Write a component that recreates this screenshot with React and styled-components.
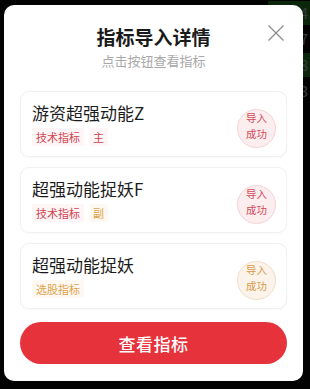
import React from 'react';
import styled, { createGlobalStyle } from 'styled-components';

const GlobalStyle = createGlobalStyle`
  html, body {
    margin: 0;
    padding: 0;
    background: #050505;
  }
  body {
    font-family: "Noto Sans CJK SC", "Noto Sans", sans-serif;
  }
`;

const Screen = styled.div`
  position: relative;
  width: 310px;
  height: 389px;
  overflow: hidden;
  background: #0c0c0c;
`;

const StockList = styled.div`
  display: flex;
  flex-direction: column;
`;

const StockRow = styled.div`
  display: flex;
  align-items: center;
  justify-content: flex-end;
  height: 26px;
  color: #cfcfcf;
  font-size: 15px;
`;

const StockValue = styled.span`
  width: 40px;
  height: 24px;
  line-height: 24px;
  text-align: right;
  padding-right: 2px;
  background: ${(p) => (p.$up ? '#2d8a2d' : 'transparent')};
`;

const Overlay = styled.div`
  position: absolute;
  inset: 0;
  background: rgba(0, 0, 0, 0.72);
  display: flex;
  align-items: flex-start;
  padding: 5px 7px 0 4px;
`;

const Modal = styled.div`
  position: relative;
  width: 299px;
  box-sizing: border-box;
  background: #ffffff;
  border-radius: 10px;
  padding: 19px 16px 17px;
  display: flex;
  flex-direction: column;
`;

const Header = styled.div`
  display: flex;
  flex-direction: column;
  align-items: center;
  gap: 2px;
  margin-bottom: 21px;
`;

const Title = styled.h2`
  margin: 0;
  font-size: 19px;
  line-height: 26px;
  font-weight: 600;
  color: #1a1a1a;
`;

const Subtitle = styled.p`
  margin: 0;
  font-size: 13px;
  line-height: 18px;
  color: #a8a8a8;
`;

const CloseButton = styled.button`
  position: absolute;
  top: 20px;
  right: 19px;
  width: 16px;
  height: 16px;
  padding: 0;
  border: none;
  background: none;
  display: flex;
`;

const CardList = styled.div`
  display: flex;
  flex-direction: column;
  gap: 10px;
`;

const Card = styled.div`
  display: flex;
  justify-content: space-between;
  height: 66px;
  box-sizing: border-box;
  padding: 10px 10px 0 11px;
  border: 1px solid #f0f0f0;
  border-radius: 9px;
  box-shadow: 0 1px 3px rgba(0, 0, 0, 0.03);
`;

const CardInfo = styled.div`
  display: flex;
  flex-direction: column;
  gap: 4px;
`;

const CardTitle = styled.div`
  font-size: 17px;
  line-height: 22px;
  color: #1c1c1c;
`;

const TagRow = styled.div`
  display: flex;
  gap: 5px;
`;

const tagColors = {
  red: { fg: '#d2434f', bg: '#fdf5f6' },
  gold: { fg: '#e2a24a', bg: '#fdf9f2' },
};

const Tag = styled.span`
  font-size: 11px;
  line-height: 18px;
  padding: 0 4px;
  border-radius: 3px;
  color: ${(p) => tagColors[p.$tone].fg};
  background: ${(p) => tagColors[p.$tone].bg};
`;

const badgeColors = {
  red: { fg: '#d24a58', bg: '#fcedef', border: '#f3d3d8' },
  gold: { fg: '#d99a4c', bg: '#fcf4ea', border: '#f1ddc4' },
};

const Badge = styled.div`
  width: 39px;
  height: 39px;
  box-sizing: border-box;
  margin-top: 7px;
  border-radius: 50%;
  border: 1px solid ${(p) => badgeColors[p.$tone].border};
  background: ${(p) => badgeColors[p.$tone].bg};
  color: ${(p) => badgeColors[p.$tone].fg};
  font-size: 10.5px;
  line-height: 15.5px;
  display: flex;
  flex-direction: column;
  align-items: center;
  justify-content: center;
  padding-bottom: 6px;
  flex-shrink: 0;
`;

const PrimaryButton = styled.button`
  margin-top: 13px;
  height: 42px;
  border: none;
  border-radius: 21px;
  background: #e6323a;
  color: #ffffff;
  font-family: inherit;
  font-size: 17px;
  font-weight: 500;
  letter-spacing: 0.5px;
`;

const stocks = [
  { value: '4', up: true },
  { value: '7', up: false },
  { value: '8', up: true },
  { value: '3', up: false },
];

const items = [
  {
    name: '游资超强动能Z',
    tags: [
      { text: '技术指标', tone: 'red' },
      { text: '主', tone: 'red' },
    ],
    tone: 'red',
  },
  {
    name: '超强动能捉妖F',
    tags: [
      { text: '技术指标', tone: 'red' },
      { text: '副', tone: 'gold' },
    ],
    tone: 'red',
  },
  {
    name: '超强动能捉妖',
    tags: [{ text: '选股指标', tone: 'gold' }],
    tone: 'gold',
  },
];

const CloseIcon = () => (
  <svg width="16" height="16" viewBox="0 0 16 16" fill="none">
    <path d="M0.5 0.5L15.5 15.5M15.5 0.5L0.5 15.5" stroke="#8c8c8c" strokeWidth="1.3" />
  </svg>
);

const App = () => {
  return (
    <>
      <GlobalStyle />
      <Screen>
        <StockList>
          {stocks.map((s, i) => (
            <StockRow key={i}>
              <StockValue $up={s.up}>{s.value}</StockValue>
            </StockRow>
          ))}
        </StockList>
        <Overlay>
          <Modal>
            <Header>
              <Title>指标导入详情</Title>
              <Subtitle>点击按钮查看指标</Subtitle>
            </Header>
            <CloseButton aria-label="关闭">
              <CloseIcon />
            </CloseButton>
            <CardList>
              {items.map((item) => (
                <Card key={item.name}>
                  <CardInfo>
                    <CardTitle>{item.name}</CardTitle>
                    <TagRow>
                      {item.tags.map((t) => (
                        <Tag key={t.text} $tone={t.tone}>
                          {t.text}
                        </Tag>
                      ))}
                    </TagRow>
                  </CardInfo>
                  <Badge $tone={item.tone}>
                    <span>导入</span>
                    <span>成功</span>
                  </Badge>
                </Card>
              ))}
            </CardList>
            <PrimaryButton>查看指标</PrimaryButton>
          </Modal>
        </Overlay>
      </Screen>
    </>
  );
};

export default App;
